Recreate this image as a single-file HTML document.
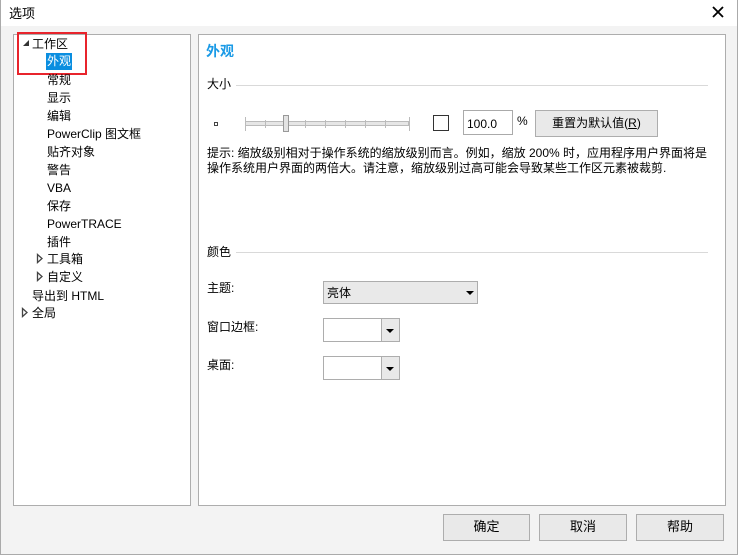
<!DOCTYPE html>
<html><head><meta charset="utf-8"><style>
*{margin:0;padding:0;box-sizing:border-box}
body{width:738px;height:555px;background:#f3f3f3;font-family:"Liberation Sans","Noto Sans CJK SC",sans-serif;font-size:12px;color:#000;position:relative;overflow:hidden}
.a{position:absolute}
#win{left:0;top:0;width:738px;height:555px;border:1px solid #aaa;border-top:none}
#title{left:0;top:0;width:738px;height:26px;background:#fff}
.panel{background:#fff;border:1px solid #adadad}
.t{position:absolute;white-space:nowrap;line-height:16px}
.btn{position:absolute;background:#e9e9e9;border:1px solid #adadad;text-align:center;line-height:24px;font-size:13px}
.hr{position:absolute;height:1px;background:#d9d9d9}
.dd{position:absolute;background:#fff;border:1px solid #adadad}
.arr{position:absolute;width:0;height:0;border-left:4px solid transparent;border-right:4px solid transparent;border-top:4px solid #000}
</style></head><body>
<div class="a" id="title"></div>
<div class="t" style="left:9px;top:6px;font-size:13px">选项</div>
<svg class="a" style="left:711px;top:5px" width="14" height="14"><path d="M2 2L12 12M12 2L2 12" stroke="#000" stroke-width="1.8"/></svg>
<div class="a" id="win"></div>

<div class="a panel" style="left:13px;top:34px;width:178px;height:472px"></div>
<div class="a" style="left:17px;top:32px;width:70px;height:43px;border:2px solid #e8242c"></div>
<svg class="a" style="left:22px;top:39px" width="8" height="8"><path d="M7 1L7 7L1 7Z" fill="#333"/></svg>
<div class="t" style="left:32px;top:36px">工作区</div>
<div class="a" style="left:46px;top:53px;width:26px;height:17px;background:#0a8ee0"></div>
<div class="t" style="left:47px;top:53px;color:#fff">外观</div>
<div class="t" style="left:47px;top:72px">常规</div>
<div class="t" style="left:47px;top:90px">显示</div>
<div class="t" style="left:47px;top:108px">编辑</div>
<div class="t" style="left:47px;top:126px">PowerClip 图文框</div>
<div class="t" style="left:47px;top:144px">贴齐对象</div>
<div class="t" style="left:47px;top:162px">警告</div>
<div class="t" style="left:47px;top:180px">VBA</div>
<div class="t" style="left:47px;top:198px">保存</div>
<div class="t" style="left:47px;top:216px">PowerTRACE</div>
<div class="t" style="left:47px;top:234px">插件</div>
<svg class="a" style="left:36px;top:253px" width="8" height="11"><path d="M1.5 1.5L6 5.5L1.5 9.5Z" fill="#fff" stroke="#444" stroke-width="1.3"/></svg>
<div class="t" style="left:47px;top:251px">工具箱</div>
<svg class="a" style="left:36px;top:271px" width="8" height="11"><path d="M1.5 1.5L6 5.5L1.5 9.5Z" fill="#fff" stroke="#444" stroke-width="1.3"/></svg>
<div class="t" style="left:47px;top:269px">自定义</div>
<div class="t" style="left:32px;top:288px">导出到 HTML</div>
<svg class="a" style="left:21px;top:307px" width="8" height="11"><path d="M1.5 1.5L6 5.5L1.5 9.5Z" fill="#fff" stroke="#444" stroke-width="1.3"/></svg>
<div class="t" style="left:32px;top:305px">全局</div>

<div class="a panel" style="left:198px;top:34px;width:528px;height:472px"></div>
<div class="t" style="left:206px;top:43px;color:#1a9ae6;font-size:14px;font-weight:bold">外观</div>
<div class="t" style="left:207px;top:76px">大小</div>
<div class="hr" style="left:236px;top:85px;width:472px"></div>
<div class="a" style="left:214px;top:122px;width:4px;height:4px;border:1px solid #444"></div>
<div class="a" style="left:245px;top:121px;width:164px;height:5px;border:1px solid #bbb;background:#e6e6e6"></div>
<svg class="a" style="left:243px;top:115px" width="170" height="18"><g stroke="#bbb"><path d="M2.5 2v14M22.5 5v8M42.5 5v8M62.5 5v8M82.5 5v8M102.5 5v8M122.5 5v8M142.5 5v8M166.5 2v14"/></g></svg>
<div class="a" style="left:283px;top:115px;width:6px;height:17px;background:#e3e3e3;border:1px solid #999"></div>
<div class="a" style="left:433px;top:115px;width:16px;height:16px;border:1px solid #333;background:#fff"></div>
<div class="a" style="left:463px;top:110px;width:50px;height:25px;border:1px solid #aaa;background:#fff"></div>
<div class="t" style="left:467px;top:116px">100.0</div>
<div class="t" style="left:517px;top:113px">%</div>
<div class="btn" style="left:535px;top:110px;width:123px;height:27px;line-height:25px;font-size:12px">重置为默认值(<u>R</u>)</div>
<div class="t" style="left:207px;top:145px">提示: 缩放级别相对于操作系统的缩放级别而言。例如，缩放 200% 时，应用程序用户界面将是</div>
<div class="t" style="left:207px;top:160px">操作系统用户界面的两倍大。请注意，缩放级别过高可能会导致某些工作区元素被裁剪.</div>

<div class="t" style="left:207px;top:244px">颜色</div>
<div class="hr" style="left:236px;top:252px;width:472px"></div>
<div class="t" style="left:207px;top:280px">主题:</div>
<div class="dd" style="left:323px;top:281px;width:155px;height:23px;background:#e9e9e9"></div>
<div class="t" style="left:327px;top:285px">亮体</div>
<div class="arr" style="left:466px;top:291px"></div>
<div class="t" style="left:207px;top:319px">窗口边框:</div>
<div class="dd" style="left:323px;top:318px;width:77px;height:24px"></div>
<div class="a" style="left:381px;top:319px;width:18px;height:22px;background:#e9e9e9;border-left:1px solid #adadad"></div>
<div class="arr" style="left:386px;top:329px"></div>
<div class="t" style="left:207px;top:357px">桌面:</div>
<div class="dd" style="left:323px;top:356px;width:77px;height:24px"></div>
<div class="a" style="left:381px;top:357px;width:18px;height:22px;background:#e9e9e9;border-left:1px solid #adadad"></div>
<div class="arr" style="left:386px;top:367px"></div>

<div class="btn" style="left:443px;top:514px;width:87px;height:27px">确定</div>
<div class="btn" style="left:539px;top:514px;width:88px;height:27px">取消</div>
<div class="btn" style="left:636px;top:514px;width:88px;height:27px">帮助</div>
</body></html>
